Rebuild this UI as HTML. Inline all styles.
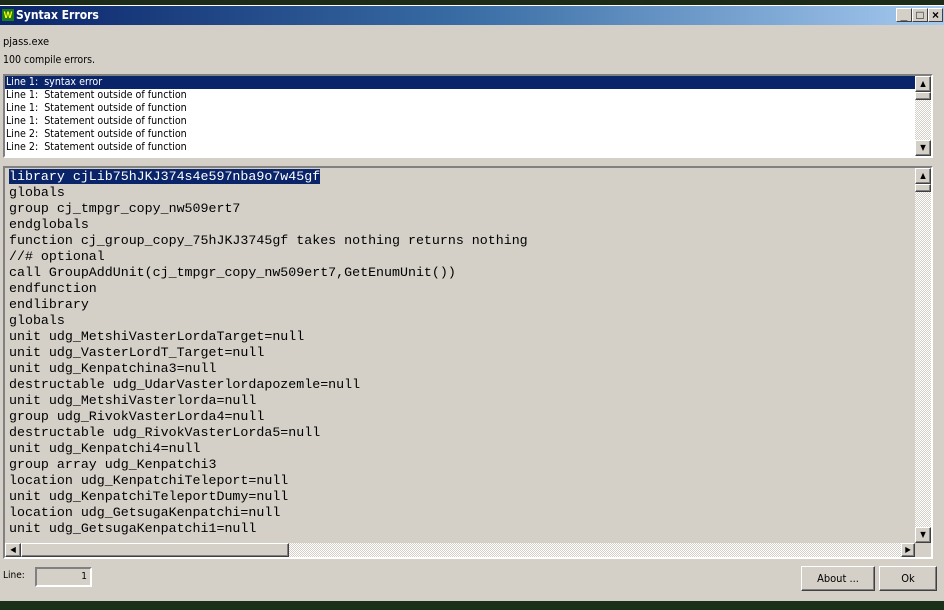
<!DOCTYPE html>
<html><head><style>
*{margin:0;padding:0;box-sizing:border-box}
body{width:944px;height:610px;overflow:hidden;background:#1a2a14;font-family:"DejaVu Sans Condensed","DejaVu Sans",sans-serif;font-size:11px;position:relative}
.abs{position:absolute}
.win{left:0;top:5px;width:944px;height:596px;background:#d4d0c8;border-top:1px solid #fff}
.title{left:0;top:6px;width:944px;height:19px;background:linear-gradient(90deg,#0a246a,#3a6ea5 50%,#a6caf0);color:#fff;font-weight:bold;font-size:12px;line-height:19px;padding-left:16px}
.tb{top:8px;width:16px;height:14px;background:#d4d0c8;border:1px solid;border-color:#fff #404040 #404040 #fff;font:bold 12px "Liberation Sans",sans-serif;text-align:center;line-height:12px;color:#000}
.sunk{border:2px solid;border-color:#808080 #fff #fff #808080}
.list{left:3px;top:74px;width:930px;height:84px;background:#fff}
.row{height:13px;line-height:13px;padding-left:1px;font-size:10.6px;white-space:pre}
.sel{background:#0a246a;color:#fff}
.code{left:3px;top:166px;width:930px;height:393px;background:#d4d0c8}
.cl{font-family:"Liberation Mono",monospace;font-size:13.3px;line-height:16px;height:16px;white-space:pre;padding-left:4px}
.vs{background:repeating-conic-gradient(#fff 0 25%,#d4d0c8 0 50%) 0 0/2px 2px}
.btn{background:#d4d0c8;border:1px solid;border-color:#fff #404040 #404040 #fff;box-shadow:inset -1px -1px #808080}
.arr{font-size:8px;text-align:center;line-height:14px;color:#000}
</style></head><body>
<div class="abs win"></div>
<div class="abs title">Syntax Errors</div>
<div class="abs" style="left:2px;top:9px;width:12px;height:12px;background:#1f7a1f;color:#ff0;font:bold 9px sans-serif;line-height:12px;text-align:center">W</div>
<div class="abs tb" style="left:896px">_</div>
<div class="abs tb" style="left:912px">□</div>
<div class="abs tb" style="left:928px;width:15px">×</div>
<div class="abs" style="left:3px;top:35px">pjass.exe</div>
<div class="abs" style="left:3px;top:54px;font-size:10.5px">100 compile errors.</div>
<div class="abs list sunk">
<div class="row sel" style="width:911px">Line 1:  syntax error</div>
<div class="row">Line 1:  Statement outside of function</div>
<div class="row">Line 1:  Statement outside of function</div>
<div class="row">Line 1:  Statement outside of function</div>
<div class="row">Line 2:  Statement outside of function</div>
<div class="row">Line 2:  Statement outside of function</div>
<div class="abs vs" style="right:0;top:0;width:16px;height:80px"></div>
<div class="abs btn arr" style="right:0;top:0;width:16px;height:16px">▲</div>
<div class="abs btn" style="right:0;top:16px;width:16px;height:8px"></div>
<div class="abs btn arr" style="right:0;top:64px;width:16px;height:16px">▼</div>
</div>
<div class="abs code sunk">
<div style="padding-top:1px">
<div class="cl"><span class="sel">library cjLib75hJKJ374s4e597nba9o7w45gf</span></div>
<div class="cl">globals</div>
<div class="cl">group cj_tmpgr_copy_nw509ert7</div>
<div class="cl">endglobals</div>
<div class="cl">function cj_group_copy_75hJKJ3745gf takes nothing returns nothing</div>
<div class="cl">//# optional</div>
<div class="cl">call GroupAddUnit(cj_tmpgr_copy_nw509ert7,GetEnumUnit())</div>
<div class="cl">endfunction</div>
<div class="cl">endlibrary</div>
<div class="cl">globals</div>
<div class="cl">unit udg_MetshiVasterLordaTarget=null</div>
<div class="cl">unit udg_VasterLordT_Target=null</div>
<div class="cl">unit udg_Kenpatchina3=null</div>
<div class="cl">destructable udg_UdarVasterlordapozemle=null</div>
<div class="cl">unit udg_MetshiVasterlorda=null</div>
<div class="cl">group udg_RivokVasterLorda4=null</div>
<div class="cl">destructable udg_RivokVasterLorda5=null</div>
<div class="cl">unit udg_Kenpatchi4=null</div>
<div class="cl">group array udg_Kenpatchi3</div>
<div class="cl">location udg_KenpatchiTeleport=null</div>
<div class="cl">unit udg_KenpatchiTeleportDumy=null</div>
<div class="cl">location udg_GetsugaKenpatchi=null</div>
<div class="cl">unit udg_GetsugaKenpatchi1=null</div>
</div>
<div class="abs vs" style="right:0;top:0;width:16px;height:375px"></div>
<div class="abs btn arr" style="right:0;top:0;width:16px;height:16px">▲</div>
<div class="abs btn" style="right:0;top:16px;width:16px;height:8px"></div>
<div class="abs btn arr" style="right:0;top:359px;width:16px;height:16px">▼</div>
<div class="abs vs" style="left:0;top:375px;width:910px;height:14px"></div>
<div class="abs btn arr" style="left:0;top:375px;width:16px;height:14px;line-height:12px">◀</div>
<div class="abs btn" style="left:16px;top:375px;width:268px;height:14px"></div>
<div class="abs btn arr" style="left:896px;top:375px;width:14px;height:14px;line-height:12px">▶</div>
</div>
<div class="abs" style="left:3px;top:570px;font-size:10px">Line:</div>
<div class="abs sunk" style="left:35px;top:567px;width:57px;height:20px;text-align:right;padding-right:3px;line-height:16px;font-size:10px">1</div>
<div class="abs btn" style="left:801px;top:566px;width:74px;height:25px;text-align:center;line-height:23px">About ...</div>
<div class="abs btn" style="left:879px;top:566px;width:58px;height:25px;text-align:center;line-height:23px">Ok</div>
<div class="abs" style="left:0;top:0;width:944px;height:5px;background:#1c2a18"></div>
<div class="abs" style="left:0;top:601px;width:944px;height:9px;background:#1a3018"></div>
</body></html>
